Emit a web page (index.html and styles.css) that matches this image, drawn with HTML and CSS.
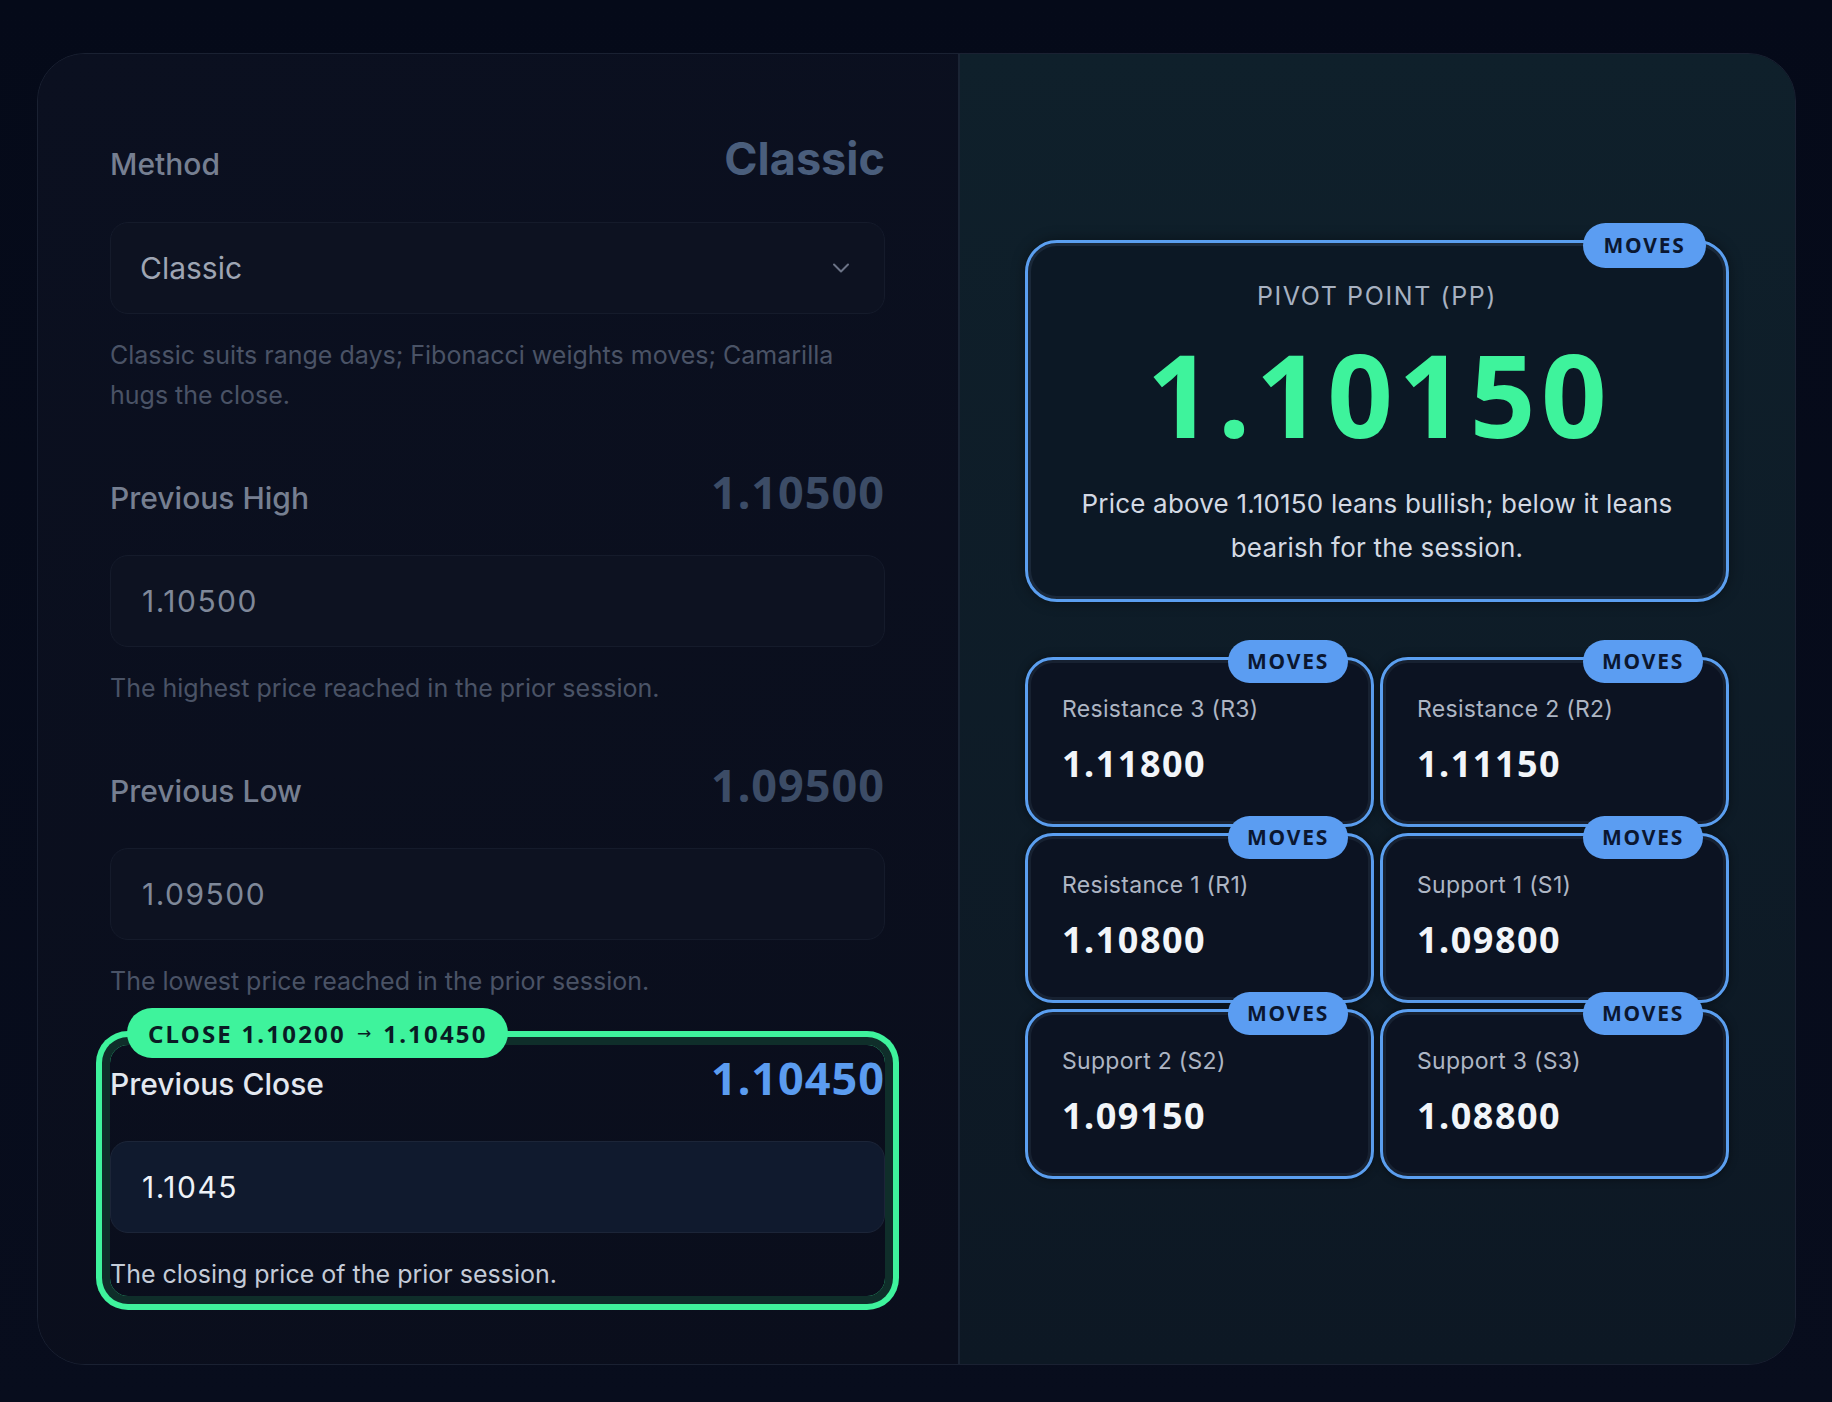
FILE: index.html
```html
<!DOCTYPE html>
<html lang="en">
<head>
    <meta charset="UTF-8">
    <meta name="viewport" content="width=device-width, initial-scale=1.0">
    <title>Pivot Point Calculator</title>
    <link rel="stylesheet" href="styles.css">
</head>
<body>
    <div class="page">
        <div class="calc">
            <!-- Inputs -->
            <section class="inputs">
                <div class="field">
                    <div class="field-head">
                        <span class="field-label">Method</span>
                        <span class="field-value method-value">Classic</span>
                    </div>
                    <div class="select-wrap">
                        <select class="control">
                            <option>Classic</option>
                            <option>Fibonacci</option>
                            <option>Camarilla</option>
                        </select>
                        <svg class="chevron" width="18" height="10" viewBox="0 0 18 10"><path d="M2 1.5l7 7 7-7" fill="none" stroke="#6b7386" stroke-width="2" stroke-linecap="round" stroke-linejoin="round"/></svg>
                    </div>
                    <p class="hint">Classic suits range days; Fibonacci weights moves; Camarilla hugs the close.</p>
                </div>

                <div class="field">
                    <div class="field-head">
                        <span class="field-label">Previous High</span>
                        <span class="field-value">1.10500</span>
                    </div>
                    <input class="control" type="text" value="1.10500">
                    <p class="hint">The highest price reached in the prior session.</p>
                </div>

                <div class="field">
                    <div class="field-head">
                        <span class="field-label">Previous Low</span>
                        <span class="field-value">1.09500</span>
                    </div>
                    <input class="control" type="text" value="1.09500">
                    <p class="hint">The lowest price reached in the prior session.</p>
                </div>

                <div class="field active">
                    <span class="change-badge">CLOSE 1.10200<span class="arrow">→</span>1.10450</span>
                    <div class="field-head">
                        <span class="field-label">Previous Close</span>
                        <span class="field-value">1.10450</span>
                    </div>
                    <input class="control" type="text" value="1.1045">
                    <p class="hint">The closing price of the prior session.</p>
                </div>
            </section>

            <!-- Results -->
            <section class="results">
                <div class="pivot">
                    <span class="moves">MOVES</span>
                    <div class="pivot-label">PIVOT POINT (PP)</div>
                    <div class="pivot-value">1.10150</div>
                    <p class="pivot-note">Price above 1.10150 leans bullish; below it leans bearish for the session.</p>
                </div>

                <div class="levels">
                    <div class="level">
                        <span class="moves">MOVES</span>
                        <div class="level-name">Resistance 3 (R3)</div>
                        <div class="level-value">1.11800</div>
                    </div>
                    <div class="level">
                        <span class="moves">MOVES</span>
                        <div class="level-name">Resistance 2 (R2)</div>
                        <div class="level-value">1.11150</div>
                    </div>
                    <div class="level">
                        <span class="moves">MOVES</span>
                        <div class="level-name">Resistance 1 (R1)</div>
                        <div class="level-value">1.10800</div>
                    </div>
                    <div class="level">
                        <span class="moves">MOVES</span>
                        <div class="level-name">Support 1 (S1)</div>
                        <div class="level-value">1.09800</div>
                    </div>
                    <div class="level">
                        <span class="moves">MOVES</span>
                        <div class="level-name">Support 2 (S2)</div>
                        <div class="level-value">1.09150</div>
                    </div>
                    <div class="level">
                        <span class="moves">MOVES</span>
                        <div class="level-name">Support 3 (S3)</div>
                        <div class="level-value">1.08800</div>
                    </div>
                </div>
            </section>
        </div>
    </div>
</body>
</html>
```

FILE: styles.css
```css
body {
    margin: 0;
    font-family: Inter, "Noto Sans", sans-serif;
    background: linear-gradient(180deg, #050a19 0%, #080d1d 100%);
}
.page {
    height: 1402px;
    box-sizing: border-box;
    padding: 53px 36px 37px 37px;
}
.calc {
    height: 100%;
    box-sizing: border-box;
    display: grid;
    grid-template-columns: 920px 1fr;
    border: 1px solid #1a2132;
    border-radius: 48px;
    overflow: hidden;
    background: #0a0f1e;
}

/* Left column: form fields */
.inputs {
    display: flex;
    flex-direction: column;
    gap: 50px;
    padding: 78px 73px 0 72px;
    background: linear-gradient(160deg, #0b1020 0%, #0a0e1c 100%);
}
.field {
    position: relative;
    border-radius: 18px;
}
.field-head {
    display: flex;
    justify-content: space-between;
    align-items: baseline;
    margin-bottom: 36px;
}
.field-label {
    font-size: 30px;
    font-weight: 500;
    line-height: 34px;
    color: #767f91;
}
.field-value {
    font-family: "Noto Sans", sans-serif;
    font-weight: 700;
    font-size: 45px;
    line-height: 54px;
    letter-spacing: 1px;
    color: #3c4c66;
}
.method-value {
    font-family: Inter, sans-serif;
    letter-spacing: 0;
    color: #4a5e7c;
}
.control {
    display: block;
    width: 100%;
    height: 92px;
    box-sizing: border-box;
    margin: 0;
    padding: 0 30px 0 31px;
    border: 1px solid #151b2b;
    border-radius: 18px;
    background: #0d1221;
    font-family: Inter, sans-serif;
    font-size: 30px;
    letter-spacing: 1.5px;
    color: #7f8899;
    outline: none;
}
select.control {
    appearance: none;
    -webkit-appearance: none;
    letter-spacing: 0;
    color: #9ea5b3;
    padding-left: 29px;
}
.select-wrap {
    position: relative;
}
.chevron {
    position: absolute;
    right: 35px;
    top: 41px;
    pointer-events: none;
}
.hint {
    margin: 21px 0 0;
    font-size: 25px;
    line-height: 40px;
    color: #4a5366;
}

/* Field that just changed */
.field.active {
    margin-top: -6px;
    padding: 6px 0 2px;
    box-shadow: 0 0 0 8px #0f2e2a, 0 0 0 14px #3ef39c;
}
.active .field-label {
    color: #e3e8f0;
}
.active .field-value {
    color: #5b9cf0;
}
.active .control {
    background: #101a2e;
    border-color: #1c2538;
    color: #eef2f7;
}
.active .hint {
    color: #c4cbd7;
}
.change-badge {
    position: absolute;
    top: -37px;
    left: 17px;
    height: 50px;
    display: flex;
    align-items: center;
    padding: 0 20px 0 21px;
    border-radius: 25px;
    background: #3ef39c;
    color: #0a1b24;
    font-family: "Noto Sans", sans-serif;
    font-weight: 700;
    font-size: 24px;
    letter-spacing: 2.2px;
    white-space: pre;
}
.change-badge .arrow {
    font-family: "DejaVu Sans", sans-serif;
    font-weight: 400;
    font-size: 17px;
    letter-spacing: 0;
    margin: 0 12px 0 11px;
}

/* Right column: results */
.results {
    display: flex;
    flex-direction: column;
    justify-content: center;
    padding: 0 66px 0 65px;
    border-left: 2px solid #1a2434;
    background: linear-gradient(180deg, #0f202b 0%, #0d1824 100%);
}
.moves {
    position: absolute;
    top: -20px;
    right: 20px;
    width: 123px;
    height: 45px;
    display: grid;
    place-items: center;
    border-radius: 23px;
    background: #5b9df2;
    color: #0b1730;
    font-family: "Noto Sans", sans-serif;
    font-weight: 700;
    font-size: 21px;
    letter-spacing: 1.8px;
}
.pivot {
    position: relative;
    height: 362px;
    box-sizing: border-box;
    padding: 35px 40px 0;
    border: 3px solid #5b9ff0;
    border-radius: 32px;
    background: #0c1825;
    box-shadow: inset 0 0 0 3px #1a2839, 0 0 14px rgba(0, 0, 0, 0.4);
    text-align: center;
}
.pivot-label {
    font-size: 25px;
    line-height: 36px;
    letter-spacing: 1.6px;
    color: #a7b1c1;
}
.pivot-value {
    margin-top: 22px;
    padding-left: 5px;
    font-family: "Noto Sans", sans-serif;
    font-weight: 700;
    font-size: 115px;
    line-height: 1;
    letter-spacing: 5.5px;
    color: #3ef39c;
}
.pivot-note {
    margin: 31px 0 0;
    font-size: 26px;
    line-height: 44px;
    letter-spacing: 0.2px;
    color: #d3d9e3;
}
.levels {
    margin-top: 55px;
    display: grid;
    grid-template-columns: 1fr 1fr;
    gap: 6px;
}
.level {
    position: relative;
    height: 170px;
    box-sizing: border-box;
    padding: 33px 34px 0;
    border: 3px solid #5b9ff0;
    border-radius: 28px;
    background: #0c1322;
    box-shadow: inset 0 0 0 3px #172131, 0 0 10px rgba(0, 0, 0, 0.45);
}
.level .moves {
    right: 23px;
    width: 120px;
    height: 43px;
}
.level-name {
    font-size: 23px;
    line-height: 32px;
    letter-spacing: 0.3px;
    color: #aeb6c4;
}
.level-value {
    margin-top: 17px;
    font-family: "Noto Sans", sans-serif;
    font-weight: 700;
    font-size: 36px;
    line-height: 43px;
    letter-spacing: 1.5px;
    color: #f2f5f9;
}
```
